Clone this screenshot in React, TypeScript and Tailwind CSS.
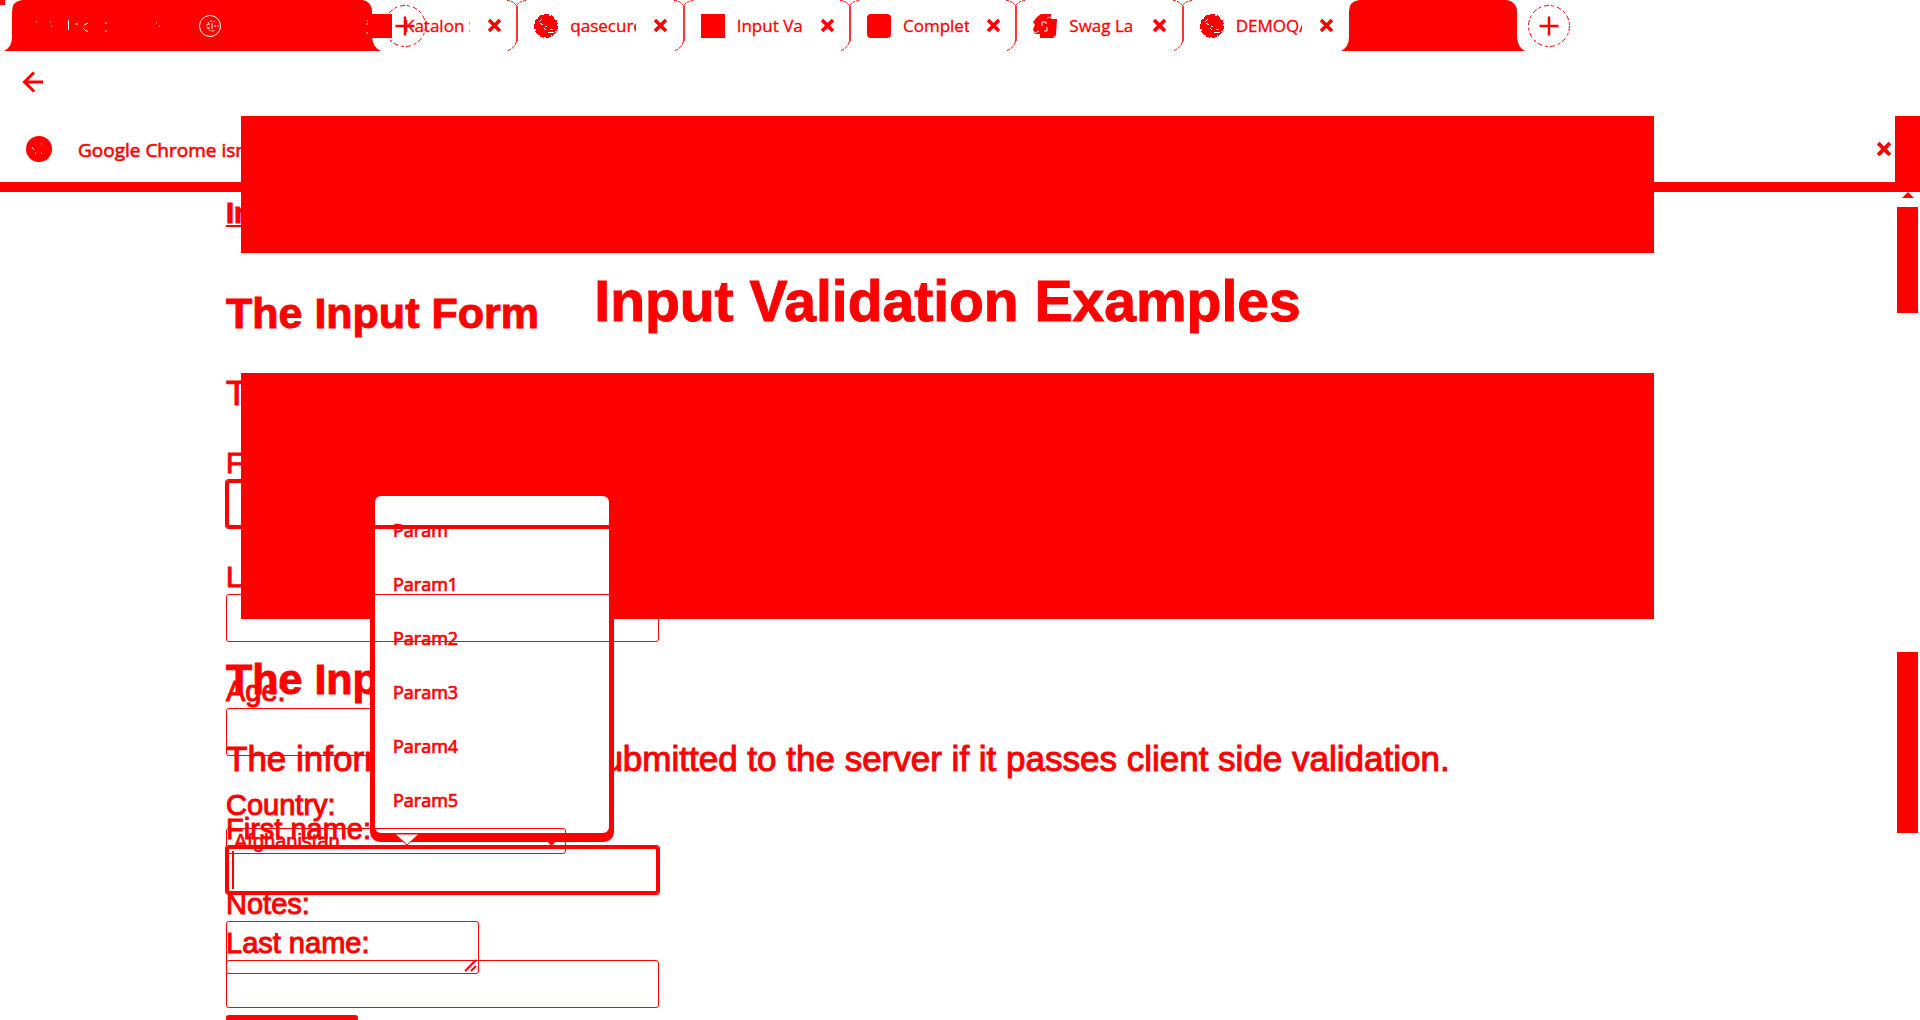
import React from "react";

const RED = "#ff0000";

function Cross({ size = 13 }: { size?: number }) {
  return (
    <svg width={size} height={size} viewBox="0 0 13 13" fill="none" stroke={RED} strokeWidth="3.600" aria-hidden="true">
      <path d="M1 1L12 12M12 1L1 12" />
    </svg>
  );
}

function Globe() {
  return (
    <svg width="24" height="24" viewBox="0 0 24 24" shapeRendering="crispEdges" aria-hidden="true">
      <circle cx="12" cy="12" r="11.500" fill="none" stroke={RED} strokeDasharray="5 1.500" />
      <circle cx="12" cy="12" r="11" fill={RED} />
      <path d="M8 5L5 8M6 9L9 11M11 12H13M10 14L12 16M14 18L20 18M16 15L19 16" fill="none" stroke="#fff" strokeWidth="1" />
    </svg>
  );
}

function Square() {
  return <span className="block size-6 bg-[#ff0000]" />;
}

function RoundSquare() {
  return <span className="block size-6 rounded-sm bg-[#ff0000]" />;
}

function Swag() {
  return (
    <svg width="24" height="24" viewBox="0 0 24 24" aria-hidden="true">
      <path d="M4 3L8 0H18V5H24L23 21L20 24H7V20H2L0 15L2 11L0 8Z" fill={RED} />
      <path d="M9 12V8H13V10M11 17H14V13" fill="none" stroke="#fff" strokeWidth="1" />
      <path d="M14 4L18 3M2 19L6 17" stroke="#fff" strokeWidth="1" />
    </svg>
  );
}

function TabEdge() {
  return (
    <svg className="absolute top-0 -right-[10px]" width="20" height="51" viewBox="0 0 20 51" fill="none" stroke={RED} aria-hidden="true">
      <path d="M0 .5Q7 1 9.500 6Q12 1 20 .5" strokeDasharray="3 1" />
      <path d="M10 6V41" strokeWidth="1.600" />
      <path d="M9.500 41Q8 48 1 50.500" strokeDasharray="4 1" />
    </svg>
  );
}

function PlusCircle() {
  return (
    <svg width="44" height="44" viewBox="0 0 44 44" fill="none" stroke={RED} aria-hidden="true">
      <circle cx="22" cy="22" r="20.500" strokeDasharray="5 2 3 3" />
      <path d="M12.500 22H31.500M22 12.500V31.500" strokeWidth="2.500" />
    </svg>
  );
}

const tabs = [
  { name: "Katalon Studio", icon: <Square />, edge: true },
  { name: "qasecure", icon: <Globe />, edge: true },
  { name: "Input Va", icon: <Square />, edge: true },
  { name: "Complet", icon: <RoundSquare />, edge: true },
  { name: "Swag La", icon: <Swag />, edge: true },
  { name: "DEMOQA", icon: <Globe />, edge: false },
];

function TabBar() {
  return (
    <div className="relative flex h-[51px]">
      <span className="absolute top-0 left-0 size-[5px] bg-[#ff0000]" />
      <div className="relative w-[351px] shrink-0">
        <svg className="absolute top-0 left-1" width="377" height="51" viewBox="0 0 377 51" aria-hidden="true">
          <path d="M0 51Q8 47 8 37V12Q8 1 18 0H359Q368 2 368 12V37Q369 48 377 51Z" fill={RED} />
          <g fill="none" stroke="#fff">
            <circle cx="206" cy="26" r="10.500" />
            <path d="M211 22A5 5 0 1 0 211 30M204 24H210M204 28H210M207 26H216" strokeDasharray="2 1" />
            <path d="M64.500 20V30M71 24H74M79 28L82 31H84M80 25L84 23M102 22V24M102 30V32M32 22H33M46 22H47M47 26H48M152 23H153M155 26H156M362 24H364M364 20V22M362 33H367" />
          </g>
        </svg>
      </div>
      <div className="grid w-[998px] shrink-0 grid-cols-6">
        {tabs.map((t) => (
          <div key={t.name} className="relative flex items-center pl-[17px]">
            {t.icon}
            <span className="ml-3 w-[66px] overflow-hidden text-[17px] whitespace-nowrap [-webkit-text-stroke:0.3px]">{t.name}</span>
            <button type="button" aria-label={"Close " + t.name} className="ml-[18px]">
              <Cross />
            </button>
            {t.edge && <TabEdge />}
          </div>
        ))}
      </div>
      <div className="relative w-[178px] shrink-0">
        <svg className="absolute top-0 -left-2" width="184" height="51" viewBox="0 0 184 51" aria-hidden="true">
          <path d="M0 51Q8 47 8 37V12Q8 1 18 0H166Q176 2 176 12V37Q177 48 184 51Z" fill={RED} />
        </svg>
      </div>
      <button type="button" aria-label="New tab" className="self-center">
        <PlusCircle />
      </button>
      <button type="button" aria-label="Add tab" className="absolute top-1 left-[383px]">
        <PlusCircle />
      </button>
    </div>
  );
}

function BrowserChrome() {
  return (
    <div className="col-start-1 row-start-1 font-['Open_Sans',sans-serif]">
      <TabBar />
      <div className="flex h-[65px] items-start pt-5 pl-[22px]">
        <button type="button" aria-label="Back">
          <svg width="22" height="22" viewBox="0 0 22 22" fill="none" stroke={RED} strokeWidth="3" aria-hidden="true">
            <path d="M21 11H3M12 1.500L2.500 11L12 20.500" />
          </svg>
        </button>
      </div>
      <div className="flex h-[66px] items-center pr-[29px] pl-[26px]">
        <svg width="26" height="26" viewBox="0 0 26 26" aria-hidden="true">
          <circle cx="13" cy="13" r="13" fill={RED} />
          <path d="M6 11L8 14M15 8H16M9 17H10M15 17H16" stroke="#fff" />
        </svg>
        <p className="ml-[26px] pt-[2px] text-[19px] [-webkit-text-stroke:0.6px]">Google Chrome isn</p>
        <button type="button" aria-label="Dismiss" className="ml-auto">
          <Cross size={14} />
        </button>
      </div>
      <div className="h-[10px] bg-[#ff0000]" />
    </div>
  );
}

function ScrollRail() {
  return (
    <div className="col-start-1 row-start-1 flex w-[25px] flex-col items-center justify-self-end pt-[116px]">
      <div className="h-[76px] w-full bg-[#ff0000]" />
      <svg width="12" height="6" viewBox="0 0 12 6" aria-hidden="true">
        <path d="M6 0L12 6H0Z" fill={RED} />
      </svg>
      <div className="mt-[9px] h-[106px] w-[21px] bg-[#ff0000]" />
      <div className="mt-[339px] h-[181px] w-[21px] bg-[#ff0000]" />
    </div>
  );
}

const labelClass = "block text-[29px] leading-8 [-webkit-text-stroke:1px]";

function Field({ id, label, focused, short }: { id: string; label: string; focused?: boolean; short?: boolean }) {
  return (
    <div className="mb-[33px]">
      <label htmlFor={id} className={labelClass}>
        {label}
      </label>
      <input
        id={id}
        type="text"
        className={
          "mt-px block h-12 rounded-[3px] border-[#ff0000] bg-transparent outline-none " +
          (short ? "w-[146px] " : "w-[433px] ") +
          (focused ? "border-[3px] ring-1 ring-[#ff0000]" : "border")
        }
      />
    </div>
  );
}

function FormIntro() {
  return (
    <>
      <h2 className="text-[43px] leading-[48px] font-bold [-webkit-text-stroke:1px]">The Input Form</h2>
      <p className="mt-9 mb-[34px] text-[35px] leading-10 whitespace-nowrap [-webkit-text-stroke:1px]">
        The information will be submitted to the server if it passes client side validation.
      </p>
    </>
  );
}

function LowerPage() {
  return (
    <div className="col-start-1 row-start-1 pt-[116px]">
      <div className="mr-[266px] ml-[241px]">
        <div className="h-[137px] bg-[#ff0000]" />
        <h1 className="h-[120px] pt-4 text-center text-[57px] leading-[64px] font-bold [-webkit-text-stroke:1px]">Input Validation Examples</h1>
        <div className="h-[246px] bg-[#ff0000]" />
      </div>
      <form className="mt-9 ml-[226px]">
        <FormIntro />
        <div className="relative">
          <Field id="first-b" label="First name:" focused />
          <span className="absolute top-[38px] left-[6px] h-[38px] w-[2px] bg-[#ff0000]" />
        </div>
        <Field id="last-b" label="Last name:" />
      </form>
    </div>
  );
}

function UpperPage() {
  return (
    <form className="relative col-start-1 row-start-1 ml-[226px] pt-[197px]">
      <a href="#input" className="block text-[29px] leading-8 font-bold underline decoration-2 underline-offset-2 [-webkit-text-stroke:1px]">
        Input
      </a>
      <div className="mt-[60px]">
        <FormIntro />
      </div>
      <Field id="first-a" label="First name:" focused />
      <Field id="last-a" label="Last name:" />
      <Field id="age" label="Age:" short />
      <label htmlFor="country" className={labelClass}>
        Country:
      </label>
      <div className="relative mt-[7px] w-[340px]">
        <select id="country" className="block h-[26px] w-full appearance-none rounded-[3px] border border-[#ff0000] bg-transparent pl-[7px] text-[20px] leading-6 [-webkit-text-stroke:0.6px]">
          <option>Afghanistan</option>
        </select>
        <svg className="absolute top-[12px] right-[9px]" width="11" height="6" viewBox="0 0 11 6" aria-hidden="true">
          <path d="M0 0H11L5.500 6Z" fill={RED} />
        </svg>
      </div>
      <label htmlFor="notes" className={"mt-[34px] " + labelClass}>
        Notes:
      </label>
      <div className="relative mt-px w-[253px]">
        <textarea id="notes" className="block h-[53px] w-full resize-none rounded-[3px] border border-[#ff0000] bg-transparent outline-none" />
        <svg className="absolute right-[2px] bottom-[2px]" width="13" height="13" viewBox="0 0 13 13" stroke={RED} strokeWidth="1.800" aria-hidden="true">
          <path d="M1 12L12 1M7 12L12 7" />
        </svg>
      </div>
      <button type="button" aria-label="Submit" className="mt-[41px] block h-12 w-[132px] rounded-[3px] bg-[#ff0000]" />
    </form>
  );
}

const params = ["Param", "Param1", "Param2", "Param3", "Param4", "Param5"];

function ParamMenu() {
  return (
    <div className="absolute top-[491px] left-[370px] w-[244px] rounded-[10px] bg-[#ff0000] px-[5px] pt-[5px] pb-[9px]">
      <ul className="rounded-[6px] bg-white pt-[7px] pb-[6px] font-['Open_Sans',sans-serif]">
        {params.map((p) => (
          <li key={p}>
            <button type="button" className="block h-[54px] w-full pl-[18px] text-left text-[18px] [-webkit-text-stroke:0.7px]">
              {p}
            </button>
          </li>
        ))}
      </ul>
      <svg className="absolute -bottom-1 left-6" width="26" height="13" viewBox="0 0 26 13" aria-hidden="true">
        <path d="M1 1H25L13 12Z" fill="#fff" stroke={RED} />
      </svg>
    </div>
  );
}

export default function App() {
  return (
    <main className="relative grid h-screen grid-cols-1 items-start overflow-hidden bg-white font-['Liberation_Sans',Arial,sans-serif] text-[#ff0000]">
      <BrowserChrome />
      <ScrollRail />
      <LowerPage />
      <ParamMenu />
      <UpperPage />
    </main>
  );
}
